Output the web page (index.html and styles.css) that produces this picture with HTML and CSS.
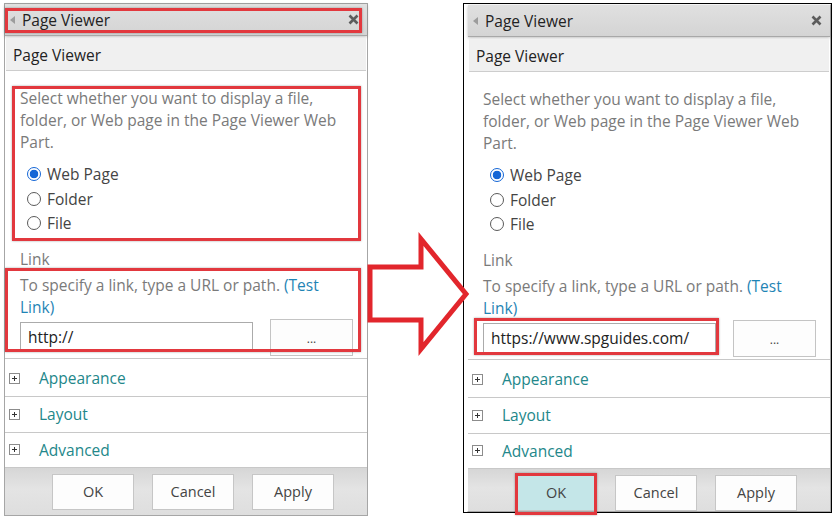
FILE: index.html
```html
<!DOCTYPE html>
<html lang="en">
<head>
  <meta charset="UTF-8">
  <meta name="viewport" content="width=device-width, initial-scale=1.0">
  <title>Page Viewer</title>
  <link rel="stylesheet" href="styles.css">
</head>
<body>
  <div class="page">
    <div class="panel">
      <div class="titlebar">
        <span class="back"></span>
        <span class="title">Page Viewer</span>
        <svg class="close" width="11" height="11" viewBox="0 0 11 11"><path d="M1.5 1.5 L9.5 9.5 M9.5 1.5 L1.5 9.5" /></svg>
      </div>
      <div class="part-head">Page Viewer</div>
      <div class="part-body">
        <p class="hint">Select whether you want to display a file, folder, or Web page in the Page Viewer Web Part.</p>
        <ul class="choices">
          <li><span class="radio checked"></span>Web Page</li>
          <li><span class="radio"></span>Folder</li>
          <li><span class="radio"></span>File</li>
        </ul>
        <div class="label">Link</div>
        <p class="hint link-hint">To specify a link, type a URL or path. <a class="test">(Test Link)</a></p>
        <div class="link-row">
          <div class="url">http://</div>
          <div class="browse">...</div>
        </div>
      </div>
      <div class="section first"><span class="plus"></span><a>Appearance</a></div>
      <div class="section"><span class="plus"></span><a>Layout</a></div>
      <div class="section last"><span class="plus"></span><a>Advanced</a></div>
      <div class="footer">
        <button class="btn">OK</button>
        <button class="btn">Cancel</button>
        <button class="btn">Apply</button>
      </div>
    </div>

    <div class="frame">
      <div class="panel">
        <div class="titlebar">
          <span class="back"></span>
          <span class="title">Page Viewer</span>
          <svg class="close" width="11" height="11" viewBox="0 0 11 11"><path d="M1.5 1.5 L9.5 9.5 M9.5 1.5 L1.5 9.5" /></svg>
        </div>
        <div class="part-head">Page Viewer</div>
        <div class="part-body">
          <p class="hint">Select whether you want to display a file, folder, or Web page in the Page Viewer Web Part.</p>
          <ul class="choices">
            <li><span class="radio checked"></span>Web Page</li>
            <li><span class="radio"></span>Folder</li>
            <li><span class="radio"></span>File</li>
          </ul>
          <div class="label">Link</div>
          <p class="hint link-hint">To specify a link, type a URL or path. <a class="test">(Test Link)</a></p>
          <div class="link-row">
            <div class="url">https://www.spguides.com/</div>
            <div class="browse">...</div>
          </div>
        </div>
        <div class="section first"><span class="plus"></span><a>Appearance</a></div>
        <div class="section"><span class="plus"></span><a>Layout</a></div>
        <div class="section last"><span class="plus"></span><a>Advanced</a></div>
        <div class="footer">
          <button class="btn active">OK</button>
          <button class="btn">Cancel</button>
          <button class="btn">Apply</button>
        </div>
      </div>
    </div>

    <!-- red annotations drawn over the screenshot -->
    <svg class="arrow" width="110" height="124" viewBox="364 232 110 124">
      <polygon points="370,267 421,267 421,239 466,294 421,349 421,320 370,320" />
    </svg>
    <div class="mark mark-title"></div>
    <div class="mark mark-choice"></div>
    <div class="mark mark-link"></div>
    <div class="mark mark-url"></div>
    <div class="mark mark-ok"></div>
  </div>
</body>
</html>
```

FILE: styles.css
```css
body {
  margin: 0;
  font-family: "Open Sans", "Noto Sans", sans-serif;
  background: #fff;
  color: #222;
}

.page {
  position: relative;
  display: flex;
  align-items: flex-start;
  gap: 95px;
  width: 834px;
  height: 519px;
  padding: 3px 0 0 4px;
  box-sizing: border-box;
  overflow: hidden;
}

.panel {
  width: 364px;
  height: 513px;
  border: 1px solid #a6a6a6;
  box-sizing: border-box;
  display: flex;
  flex-direction: column;
  background: #fff;
}

.frame {
  border: 1px solid #000;
  padding-left: 3px;
  height: 510px;
  box-sizing: border-box;
}

.frame .panel {
  height: 508px;
  border-top-color: #fff;
  border-left-color: #fff;
}

.titlebar {
  height: 31px;
  flex: none;
  display: flex;
  align-items: center;
  padding: 0 8px 0 5px;
  background: linear-gradient(#e0e0e0, #d4d4d4);
  border-bottom: 1px solid #a8a8a8;
  box-shadow: 0 1px 3px rgba(0, 0, 0, 0.25);
  margin-bottom: 2px;
}

.back {
  width: 0;
  height: 0;
  border-top: 4px solid transparent;
  border-bottom: 4px solid transparent;
  border-right: 5px solid #9c9c9c;
  margin-right: 7px;
}

.title {
  font-size: 15.5px;
  color: #222;
  flex: 1;
}

.close path {
  stroke: #5c5c5c;
  stroke-width: 2.6;
  fill: none;
}

.part-head {
  flex: none;
  height: 32px;
  margin: 0 1px;
  padding-left: 7px;
  line-height: 34px;
  font-size: 15.5px;
  background: #f0f0f0;
  border-bottom: 1px solid #cdcdcd;
}

.part-body {
  padding: 16px 13px 2px 15px;
}

.hint {
  margin: 0;
  font-size: 15.5px;
  line-height: 22px;
  color: #7a7a7a;
}

.test {
  color: #1f84b5;
}

.choices {
  list-style: none;
  margin: 9px 0 0;
  padding: 0 0 0 7px;
}

.choices li {
  display: flex;
  align-items: center;
  height: 24.5px;
  font-size: 15.5px;
  color: #444;
}

.radio {
  width: 14px;
  height: 14px;
  border: 1px solid #5a5a5a;
  border-radius: 50%;
  box-sizing: border-box;
  margin-right: 6px;
  background: #fff;
}

.radio.checked {
  border: 1px solid #1466d6;
  background: radial-gradient(circle, #1466d6 0 4px, #fff 4.6px);
}

.label {
  margin-top: 12px;
  font-size: 15.5px;
  line-height: 22px;
  color: #7a7a7a;
}

.link-hint {
  margin-top: 4px;
}

.link-row {
  display: flex;
  align-items: center;
  gap: 17px;
  height: 37px;
  margin-top: 1px;
}

.url {
  width: 233px;
  height: 30px;
  box-sizing: border-box;
  border: 1px solid #ababab;
  padding-left: 7px;
  line-height: 28px;
  font-size: 15.5px;
  color: #222;
}

.browse {
  width: 83px;
  height: 37px;
  box-sizing: border-box;
  border: 1px solid #c4c4c4;
  background: #fdfdfd;
  text-align: center;
  line-height: 38px;
  font-size: 12px;
  color: #444;
}

.section {
  flex: none;
  display: flex;
  align-items: center;
  height: 35px;
  border-top: 1px solid #c8c8c8;
  padding-left: 4px;
  font-size: 15.5px;
}

.section.first {
  height: 38px;
  padding-top: 2px;
  box-sizing: border-box;
}

.section.last {
  height: 34px;
}

.section a {
  color: #23878a;
}

.plus {
  position: relative;
  width: 9px;
  height: 9px;
  border: 1px solid #8c8c8c;
  background: #fff;
  margin-right: 19px;
}

.plus::before,
.plus::after {
  content: "";
  position: absolute;
  background: #333;
}

.plus::before {
  left: 2px;
  top: 4px;
  width: 5px;
  height: 1px;
}

.plus::after {
  left: 4px;
  top: 2px;
  width: 1px;
  height: 5px;
}

.footer {
  flex: 1;
  display: flex;
  align-items: flex-start;
  gap: 18px;
  padding: 6px 0 0 47px;
  border-top: 1px solid #c8c8c8;
  background: linear-gradient(#d6d6d6, #e4e4e4 45%, #dedede);
}

.btn {
  width: 82px;
  height: 36px;
  border: 1px solid #c6c6c6;
  background: #fdfdfd;
  font-family: inherit;
  font-size: 14.5px;
  color: #444;
}

.btn.active {
  background: #c4e6e8;
}

.arrow {
  position: absolute;
  left: 364px;
  top: 232px;
}

.arrow polygon {
  fill: none;
  stroke: #e2262c;
  stroke-width: 5;
  stroke-linejoin: miter;
}

.mark {
  position: absolute;
  border: 3px solid #e2383e;
  box-shadow: 0 0 2px rgba(0, 0, 0, 0.35);
  box-sizing: border-box;
}

.mark-title { left: 5px; top: 8px; width: 357px; height: 25px; }
.mark-choice { left: 12px; top: 86px; width: 349px; height: 155px; }
.mark-link { left: 5px; top: 268px; width: 356px; height: 84px; }
.mark-url { left: 474px; top: 318px; width: 245px; height: 37px; }
.mark-ok { left: 515px; top: 473px; width: 82px; height: 42px; }
```
